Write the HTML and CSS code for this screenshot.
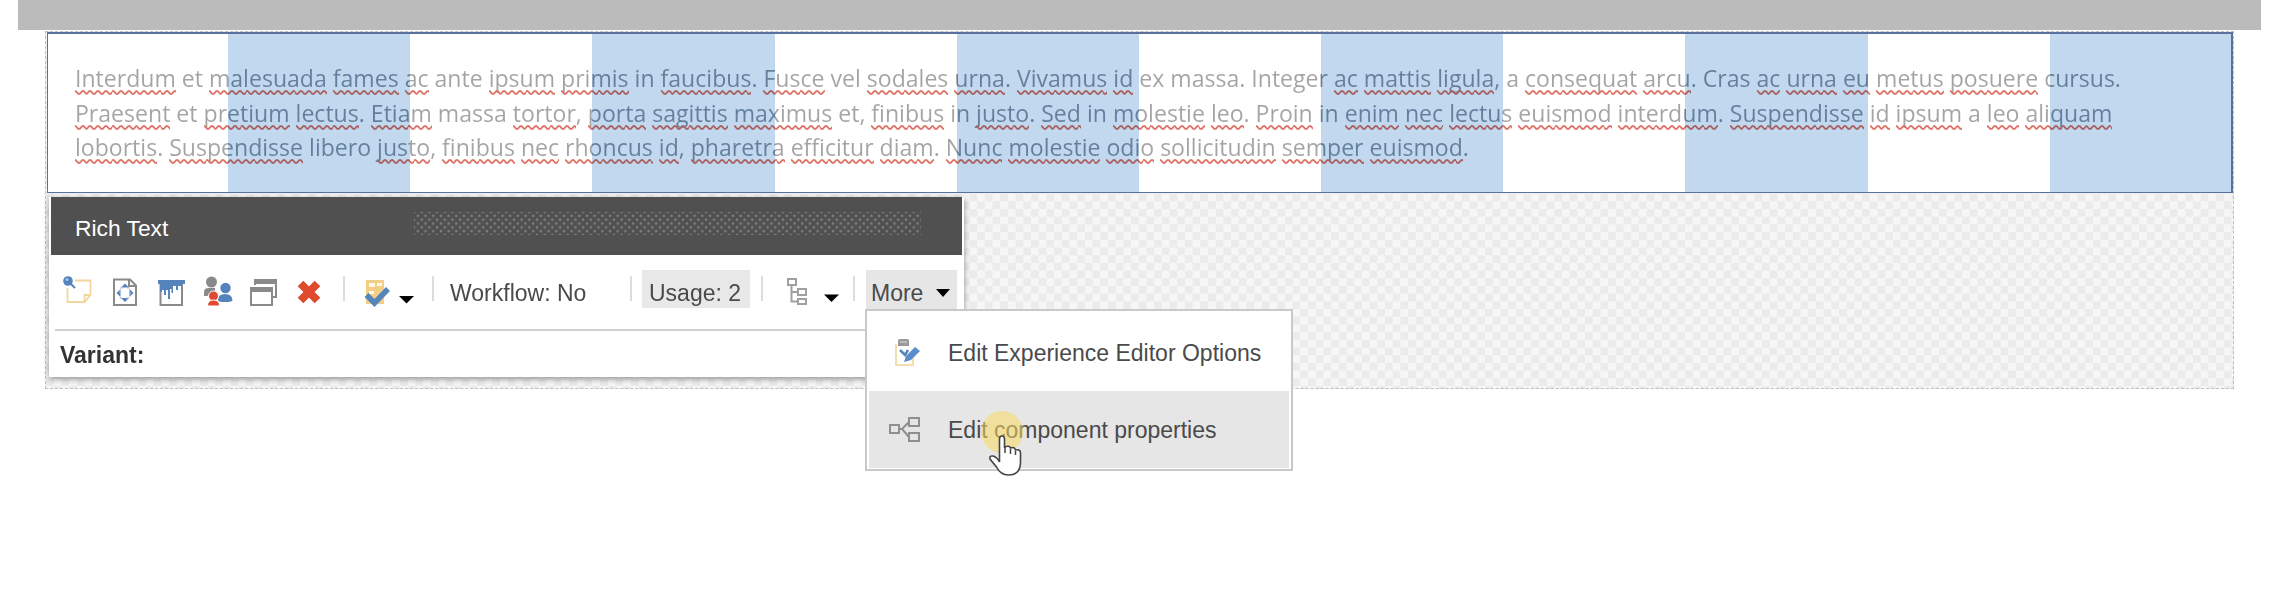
FILE: index.html
```
<!DOCTYPE html>
<html lang="en">
<head>
<meta charset="utf-8">
<title>Rich Text</title>
<link rel="stylesheet" href="styles.css">
</head>
<body>
<div class="topbar"></div>
<main class="canvas">
  <section class="rte">
    <p class="l1"><u>Interdum</u> et <u>malesuada</u> <u>fames</u> <u>ac</u> ante <u>ipsum</u> <u>primis</u> in <u>faucibus</u>. <u>Fusce</u> vel <u>sodales</u> <u>urna</u>. <u>Vivamus</u> <u>id</u> ex massa. Integer <u>ac</u> <u>mattis</u> <u>ligula</u>, a <u>consequat</u> <u>arcu</u>. Cras <u>ac</u> <u>urna</u> <u>eu</u> <u>metus</u> <u>posuere</u> cursus.</p>
    <p class="l2"><u>Praesent</u> et <u>pretium</u> <u>lectus</u>. <u>Etiam</u> massa <u>tortor</u>, <u>porta</u> <u>sagittis</u> <u>maximus</u> et, <u>finibus</u> in <u>justo</u>. <u>Sed</u> in <u>molestie</u> <u>leo</u>. <u>Proin</u> in <u>enim</u> <u>nec</u> <u>lectus</u> <u>euismod</u> <u>interdum</u>. <u>Suspendisse</u> <u>id</u> <u>ipsum</u> a <u>leo</u> <u>aliquam</u></p>
    <p class="l3"><u>lobortis</u>. <u>Suspendisse</u> libero <u>justo</u>, <u>finibus</u> <u>nec</u> <u>rhoncus</u> <u>id</u>, <u>pharetra</u> <u>efficitur</u> <u>diam</u>. <u>Nunc</u> <u>molestie</u> <u>odio</u> <u>sollicitudin</u> <u>semper</u> <u>euismod</u>.</p>
  </section>
  <section class="panel">
    <header class="title"><span>Rich Text</span><i class="grip"></i></header>
    <div class="tools">
      <svg class="icons" width="280" height="38" viewBox="0 0 280 38">
        <g fill="none" stroke="#f2d69c" stroke-width="1.8"><path d="M25 10.500H40.500V25L34.500 32H17.500V18M40.500 25H34.500V32"/></g>
        <circle cx="18" cy="11" r="4.800" fill="#5584bd"/><path d="M20 13l5 5" stroke="#5584bd" stroke-width="2"/><circle cx="17" cy="9.500" r="1.500" fill="#a5c4e4"/>
        <g fill="none" stroke="#8a8a8a" stroke-width="2"><path d="M64 9.500H80L86 15.500V35H64ZM79 10v6h7"/></g>
        <g fill="#5584bd"><path d="M71 17.500L75 13.500l4 4zM71 28L75 32l4-4zM70.500 19L66.500 23l4 4zM79.500 19l4 4-4 4z"/></g>
        <path d="M70 18h10v10H70z" fill="none" stroke="#a9c0da" stroke-dasharray="3 4"/>
        <path d="M110.500 14V35H132V14" fill="none" stroke="#8a8a8a" stroke-width="2"/>
        <path d="M108 10h27v4h-3v2h-4v4h-2v-4h-3v7h-1.500v-4H120v10h-2V20h-2v5h-2v-5h-2v2h-2v-8h-2z" fill="#5584bd"/>
        <g fill="#8a8a8a"><circle cx="161.500" cy="12" r="5.500"/><path d="M154 26v-4q0-4 5-4h6v5l-8 3z"/></g>
        <g fill="#5584bd"><circle cx="175.500" cy="18" r="5.200"/><path d="M168 30q0-6 7-6t7.500 6q0 2-7.500 2t-7-2z"/></g>
        <g fill="#e04a32" stroke="#fff"><circle cx="163.500" cy="26" r="5"/><path d="M157.500 36q0-6 6-6t6 6z"/></g>
        <g fill="none" stroke="#8a8a8a" stroke-width="2"><path d="M205 15V10h21v17h-4"/><path d="M201 19h21v16h-21z"/></g><path d="M204 9h23v5h-23zM200 17h23v5h-23z" fill="#8a8a8a"/>
        <path d="M250.500 13.500l17 17M267.500 13.500l-17 17" stroke="#df4a2e" stroke-width="8"/>
      </svg>
      <b class="sep s1"></b>
      <svg class="check" width="52" height="36" viewBox="0 0 52 36"><path d="M4 5h18v24H4z" fill="#f3cf86"/><path d="M7 8h6v4H7zM7 16h5v3H7zM15 8h5v3h-5z" fill="#fff8e6"/><path d="M4.500 20l8 8L26 14" fill="none" stroke="#5584bd" stroke-width="5.500"/><path d="M37 21h15l-7.500 7.500z" fill="#000"/></svg>
      <b class="sep s2"></b>
      <span class="wf">Workflow: No</span>
      <b class="sep s3"></b>
      <span class="usage">Usage: 2</span>
      <b class="sep s4"></b>
      <svg class="tree" width="56" height="34" viewBox="0 0 56 34"><g fill="none" stroke="#a0a0a0" stroke-width="2"><path d="M3 4h8v6H3zM13 14h8v6h-8zM13 24h8v5h-8zM6.500 10v16.500H13M6.500 17H13"/></g><path d="M39 19.500h15l-7.500 7.500z" fill="#000"/></svg>
      <b class="sep s5"></b>
      <div class="more"><span>More</span><svg width="14" height="8" viewBox="0 0 14 8"><path d="M0 0h14L7 8z" fill="#000"/></svg></div>
    </div>
    <div class="variant"><span>Variant:</span></div>
  </section>
</main>
<div class="menu">
  <div class="item">
    <svg width="38" height="34" viewBox="0 0 38 34"><path d="M9 8v21h17V21" fill="none" stroke="#f2dfae" stroke-width="2"/><path d="M13 3h7q2 0 2 2v5H11V5q0-2 2-2z" fill="#999"/><path d="M13 6h7" stroke="#ddd"/><path d="M13 14l5 5 3-5" fill="none" stroke="#5584bd" stroke-width="2.500"/><path d="M17 26l2-6 9-9 5 4-9 9z" fill="#5b8ccb"/></svg>
    <span>Edit Experience Editor Options</span>
  </div>
  <div class="item active">
    <svg width="38" height="34" viewBox="0 0 38 34"><g fill="none" stroke="#8f8f8f" stroke-width="2"><path d="M3 12h9v8H3zM22 5h10v8h-10zM22 20h10v8h-10zM12 16h3l7-7M15 16l7 8"/></g></svg>
    <span>Edit component properties</span>
  </div>
</div>
<i class="halo"></i>
<svg class="hand" width="34" height="42" viewBox="0 0 34 42"><path d="M11.500 25V4Q11.500 1 14 1T16.500 4V12q5-2 6 1 4-1.500 5 2 5-1 5 3v9q0 13-12 13-8 0-12-8L2 24Q1 20.500 5 21q4 1 6.500 6z" fill="#fff" stroke="#444" stroke-width="1.600"/><path d="M17 12v6M22.500 14v5M27.500 16v4" stroke="#444" stroke-width="1.500"/></svg>
</body>
</html>
```
FILE: styles.css
```
* { box-sizing: border-box; }
body { margin: 0; width: 2278px; height: 606px; overflow: hidden; position: relative; background: #fff; font-family: "Liberation Sans", Arial, sans-serif; font-size: 23px; color: #4a4a4a; white-space: nowrap; }
svg { display: block; flex: none; }
.topbar { height: 30px; margin: 0 17px 0 18px; background: #bbb; }
.canvas { margin: 1px 44px 0 45px; height: 358px; border: 1px dashed #c0c0c0; background: #f6f6f6 conic-gradient(#ebebeb 25%, #f6f6f6 0 50%, #ebebeb 0 75%, #f6f6f6 0) 0 0 / 15.4px 15.4px; }
.rte { position: relative; margin-left: 1px; height: 161px; padding: 27px 0 0 26px; background: #fff; border: 1px solid #5b719d; border-top-width: 2px; border-right-width: 2px; }
.rte::after { content: ""; position: absolute; inset: 0 0 0 -2px; mix-blend-mode: multiply; background: repeating-linear-gradient(90deg, #fff 0 182.15px, #c2d8ee 182.15px 364.3px); clip-path: inset(0 0 0 2px); }
.rte p { margin: 0 0 0 -28px; padding-left: 29px; height: 34.5px; line-height: 34.5px; font-family: "Open Sans", sans-serif; font-size: 23.07px; color: transparent; background: repeating-linear-gradient(90deg, #a4a4a4 0 182.15px, #8296a8 182.15px 364.3px); -webkit-background-clip: text; background-clip: text; }
.rte u { text-decoration: none; padding-bottom: 1px; background: url("data:image/svg+xml,%3Csvg xmlns='http://www.w3.org/2000/svg' width='7.7' height='5' viewBox='0 0 7.7 5'%3E%3Cpath d='M-1.9 2.5Q0 -.5 1.925 2.5T5.775 2.5T9.6 2.5' fill='none' stroke='%23df7469' stroke-width='1.8'/%3E%3C/svg%3E") 0 100% / 7.7px 5px repeat-x; }
.panel { position: relative; margin: 4px 0 0 3px; width: 915px; height: 180px; background: #fff; border: 0 solid #fff; border-width: 0 2px; box-shadow: 0 2px 6px rgba(0,0,0,.4); }
.title { height: 58px; background: #505050; color: #fff; padding: 15px 0 0 24px; display: flex; }
.title span { width: 339px; line-height: 32px; font-size: 22.8px; }
.grip { width: 507px; height: 23px; background: radial-gradient(circle, #808080 .8px, transparent 1.7px) 0 0 / 7.7px 7.7px, radial-gradient(circle, #808080 .8px, transparent 1.7px) 3.85px 3.85px / 7.7px 7.7px; }
.tools { height: 76px; margin-left: 4px; border-bottom: 2px solid #d0d0d0; display: flex; align-items: flex-start; padding-top: 15px; line-height: 46px; }
.icons { margin-left: -5px; }
.sep { flex: none; width: 2px; height: 25px; background: #ddd; margin-top: 6px; }
.s1 { margin-left: 13px; }
.check { margin: 5px 0 0 17px; }
.s2 { margin-left: 18px; }
.wf { margin-left: 16px; width: 138px; }
.s3 { margin-left: 42px; }
.usage { margin-left: 10px; width: 108px; height: 38px; padding-left: 7px; background: #e8e8e8; }
.s4 { margin-left: 11px; }
.tree { margin: 5px 0 0 22px; }
.s5 { margin-left: 12px; }
.more { margin-left: 11px; width: 91px; height: 40px; padding: 0 7px 0 5px; background: #e6e6e6; display: flex; justify-content: space-between; align-items: flex-start; }
.more svg { margin-top: 19px; }
.variant { padding: 9px 0 0 9px; line-height: 30px; font-weight: bold; color: #333; }
.menu { position: absolute; left: 865px; top: 309px; width: 428px; height: 162px; background: #fff; border: 2px solid #c9c9c9; padding: 0 2px; }
.item { height: 80px; display: flex; align-items: center; padding-left: 18px; gap: 23px; padding-top: 4px; }
.item.active { height: 77px; background: #e6e6e6; padding-top: 1px; }
.halo { position: absolute; left: 981px; top: 411px; width: 42px; height: 42px; border-radius: 50%; background: rgba(247,216,96,.55); }
.hand { position: absolute; left: 988px; top: 435px; }
```
